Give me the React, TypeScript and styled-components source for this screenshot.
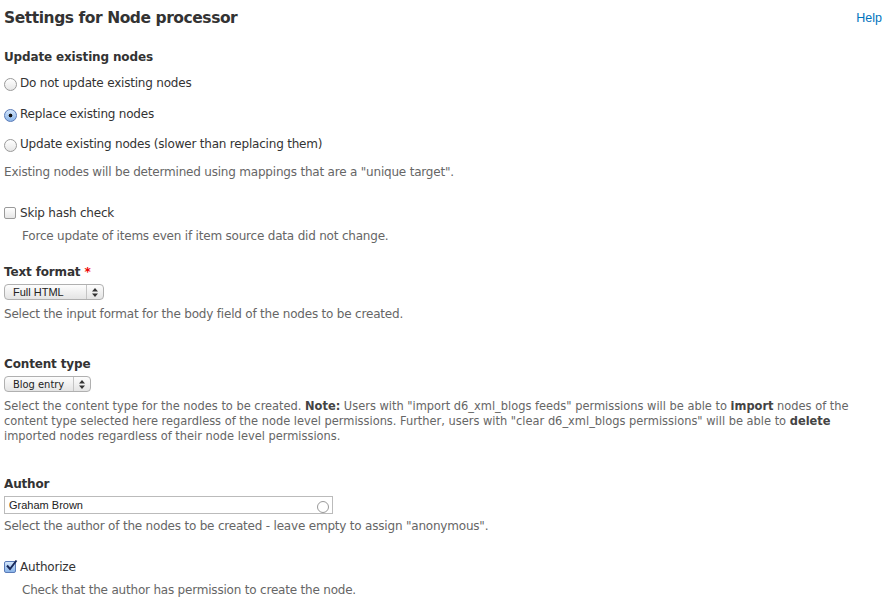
import React from "react";
import styled, { createGlobalStyle } from "styled-components";

const Global = createGlobalStyle`
  html, body { margin: 0; padding: 0; background: #fff; }
  body { font-family: "DejaVu Sans", "Liberation Sans", sans-serif; color: #333; }
`;

const Page = styled.div`
  width: 886px;
  height: 604px;
  overflow: hidden;
  padding: 0 4px;
  box-sizing: border-box;
`;

const Header = styled.div`
  display: flex;
  justify-content: space-between;
  align-items: center;
  height: 36px;
`;

const Title = styled.h2`
  margin: 0;
  font-size: 15.5px;
  letter-spacing: -0.45px;
  font-weight: bold;
  color: #333;
`;

const HelpLink = styled.a`
  font-family: "Liberation Sans", sans-serif;
  font-size: 12.5px;
  color: #0074bd;
  text-decoration: none;
`;

const Field = styled.div<{ $mt: number }>`
  margin-top: ${(p) => p.$mt}px;
`;

const Label = styled.div`
  font-size: 12px;
  letter-spacing: -0.15px;
  font-weight: bold;
  line-height: 16px;
`;

const Req = styled.span`
  color: #e00;
`;

const OptionRow = styled.label<{ $mt?: number }>`
  display: flex;
  align-items: center;
  gap: 3px;
  font-size: 12px;
  letter-spacing: -0.2px;
  line-height: 16px;
  margin-top: ${(p) => p.$mt ?? 0}px;
`;

const Radio = styled.span<{ $on?: boolean }>`
  width: 13px;
  height: 13px;
  border-radius: 50%;
  border: 1px solid ${(p) => (p.$on ? "#5a7bb8" : "#9a9a9a")};
  box-sizing: border-box;
  background: ${(p) =>
    p.$on
      ? "radial-gradient(circle, #111 0 1.6px, transparent 2.2px), linear-gradient(#d4e6fb, #8ab4e8)"
      : "linear-gradient(#fff, #e6e6e6)"};
  margin-top: 2px;
  flex: none;
`;

const Check = styled.span<{ $on?: boolean }>`
  width: 12px;
  height: 12px;
  border-radius: 2px;
  border: 1px solid ${(p) => (p.$on ? "#5a7bb8" : "#9a9a9a")};
  box-sizing: border-box;
  background: ${(p) =>
    p.$on ? "linear-gradient(#d4e6fb, #8ab4e8)" : "linear-gradient(#fff, #e6e6e6)"};
  flex: none;
  position: relative;
  margin-right: 1px;
`;

const Tick = styled.svg`
  position: absolute;
  left: 0px;
  top: -3px;
`;

const Desc = styled.div<{ $indent?: boolean; $mt?: number }>`
  font-size: 12px;
  letter-spacing: -0.2px;
  line-height: 15px;
  color: #666;
  padding-left: ${(p) => (p.$indent ? 18 : 0)}px;
  margin-top: ${(p) => p.$mt ?? 0}px;
`;

const CondDesc = styled.div`
  font-family: "DejaVu Sans Condensed", "Liberation Sans Narrow", "Liberation Sans", sans-serif;
  font-stretch: condensed;
  font-size: 12.7px;
  line-height: 15px;
  color: #666;
  margin-top: 6px;
  b { color: #444; }
`;

const Select = styled.div<{ $w: number; $cond?: boolean }>`
  width: ${(p) => p.$w}px;
  height: 16px;
  box-sizing: border-box;
  border: 1px solid #b0b0b0;
  border-radius: 4px;
  background: linear-gradient(#fdfdfd, #e4e4e4);
  display: flex;
  align-items: center;
  font-family: ${(p) =>
    p.$cond
      ? `"DejaVu Sans Condensed", "Liberation Sans Narrow", sans-serif`
      : `"Liberation Sans", sans-serif`};
  font-stretch: ${(p) => (p.$cond ? "condensed" : "normal")};
  font-size: 11px;
  color: #222;
  margin-top: 4px;
`;

const SelText = styled.span`
  flex: 1;
  padding-left: 8px;
`;

const SelArrow = styled.span`
  width: 16px;
  height: 100%;
  border-left: 1px solid #c4c4c4;
  display: flex;
  align-items: center;
  justify-content: center;
`;

const TextInput = styled.div`
  width: 329px;
  height: 18px;
  box-sizing: border-box;
  border: 1px solid #bbb;
  display: flex;
  align-items: center;
  justify-content: space-between;
  font-family: "Liberation Sans", sans-serif;
  font-size: 11px;
  color: #222;
  padding: 0 3px 0 4px;
  margin-top: 4px;
`;

const Throbber = styled.span`
  width: 10px;
  height: 10px;
  border-radius: 50%;
  border: 1px solid #999;
  margin-top: 3px;
`;

const Arrows = () => (
  <svg width="6" height="9" viewBox="0 0 6 9">
    <path d="M3 0 L6 3.5 H0 Z M3 9 L0 5.5 H6 Z" fill="#333" />
  </svg>
);

export default function App() {
  return (
    <Page>
      <Global />
      <Header>
        <Title>Settings for Node processor</Title>
        <HelpLink href="#">Help</HelpLink>
      </Header>

      <Field $mt={13}>
        <Label>Update existing nodes</Label>
        <OptionRow $mt={10}>
          <Radio />
          Do not update existing nodes
        </OptionRow>
        <OptionRow $mt={15}>
          <Radio $on />
          Replace existing nodes
        </OptionRow>
        <OptionRow $mt={14}>
          <Radio />
          Update existing nodes (slower than replacing them)
        </OptionRow>
        <Desc $mt={13}>Existing nodes will be determined using mappings that are a "unique target".</Desc>
      </Field>

      <Field $mt={25}>
        <OptionRow>
          <Check />
          Skip hash check
        </OptionRow>
        <Desc $indent $mt={8}>Force update of items even if item source data did not change.</Desc>
      </Field>

      <Field $mt={20}>
        <Label>
          Text format <Req>*</Req>
        </Label>
        <Select $w={100}>
          <SelText>Full HTML</SelText>
          <SelArrow>
            <Arrows />
          </SelArrow>
        </Select>
        <Desc $mt={7}>Select the input format for the body field of the nodes to be created.</Desc>
      </Field>

      <Field $mt={34}>
        <Label>Content type</Label>
        <Select $w={87} $cond>
          <SelText>Blog entry</SelText>
          <SelArrow>
            <Arrows />
          </SelArrow>
        </Select>
        <CondDesc>
          Select the content type for the nodes to be created. <b>Note:</b> Users with "import d6_xml_blogs feeds"
          permissions will be able to <b>import</b> nodes of the content type selected here regardless of the node
          level permissions. Further, users with "clear d6_xml_blogs permissions" will be able to <b>delete</b>{" "}
          imported nodes regardless of their node level permissions.
        </CondDesc>
      </Field>

      <Field $mt={33}>
        <Label>Author</Label>
        <TextInput>
          Graham Brown
          <Throbber />
        </TextInput>
        <Desc $mt={5}>Select the author of the nodes to be created - leave empty to assign "anonymous".</Desc>
      </Field>

      <Field $mt={25}>
        <OptionRow>
          <Check $on>
            <Tick width="13" height="13" viewBox="0 0 13 13">
              <path d="M2 6.5 L5 10 L11.5 1.5" stroke="#1a2a5a" strokeWidth="2" fill="none" />
            </Tick>
          </Check>
          Authorize
        </OptionRow>
        <Desc $indent $mt={8}>Check that the author has permission to create the node.</Desc>
      </Field>
    </Page>
  );
}
